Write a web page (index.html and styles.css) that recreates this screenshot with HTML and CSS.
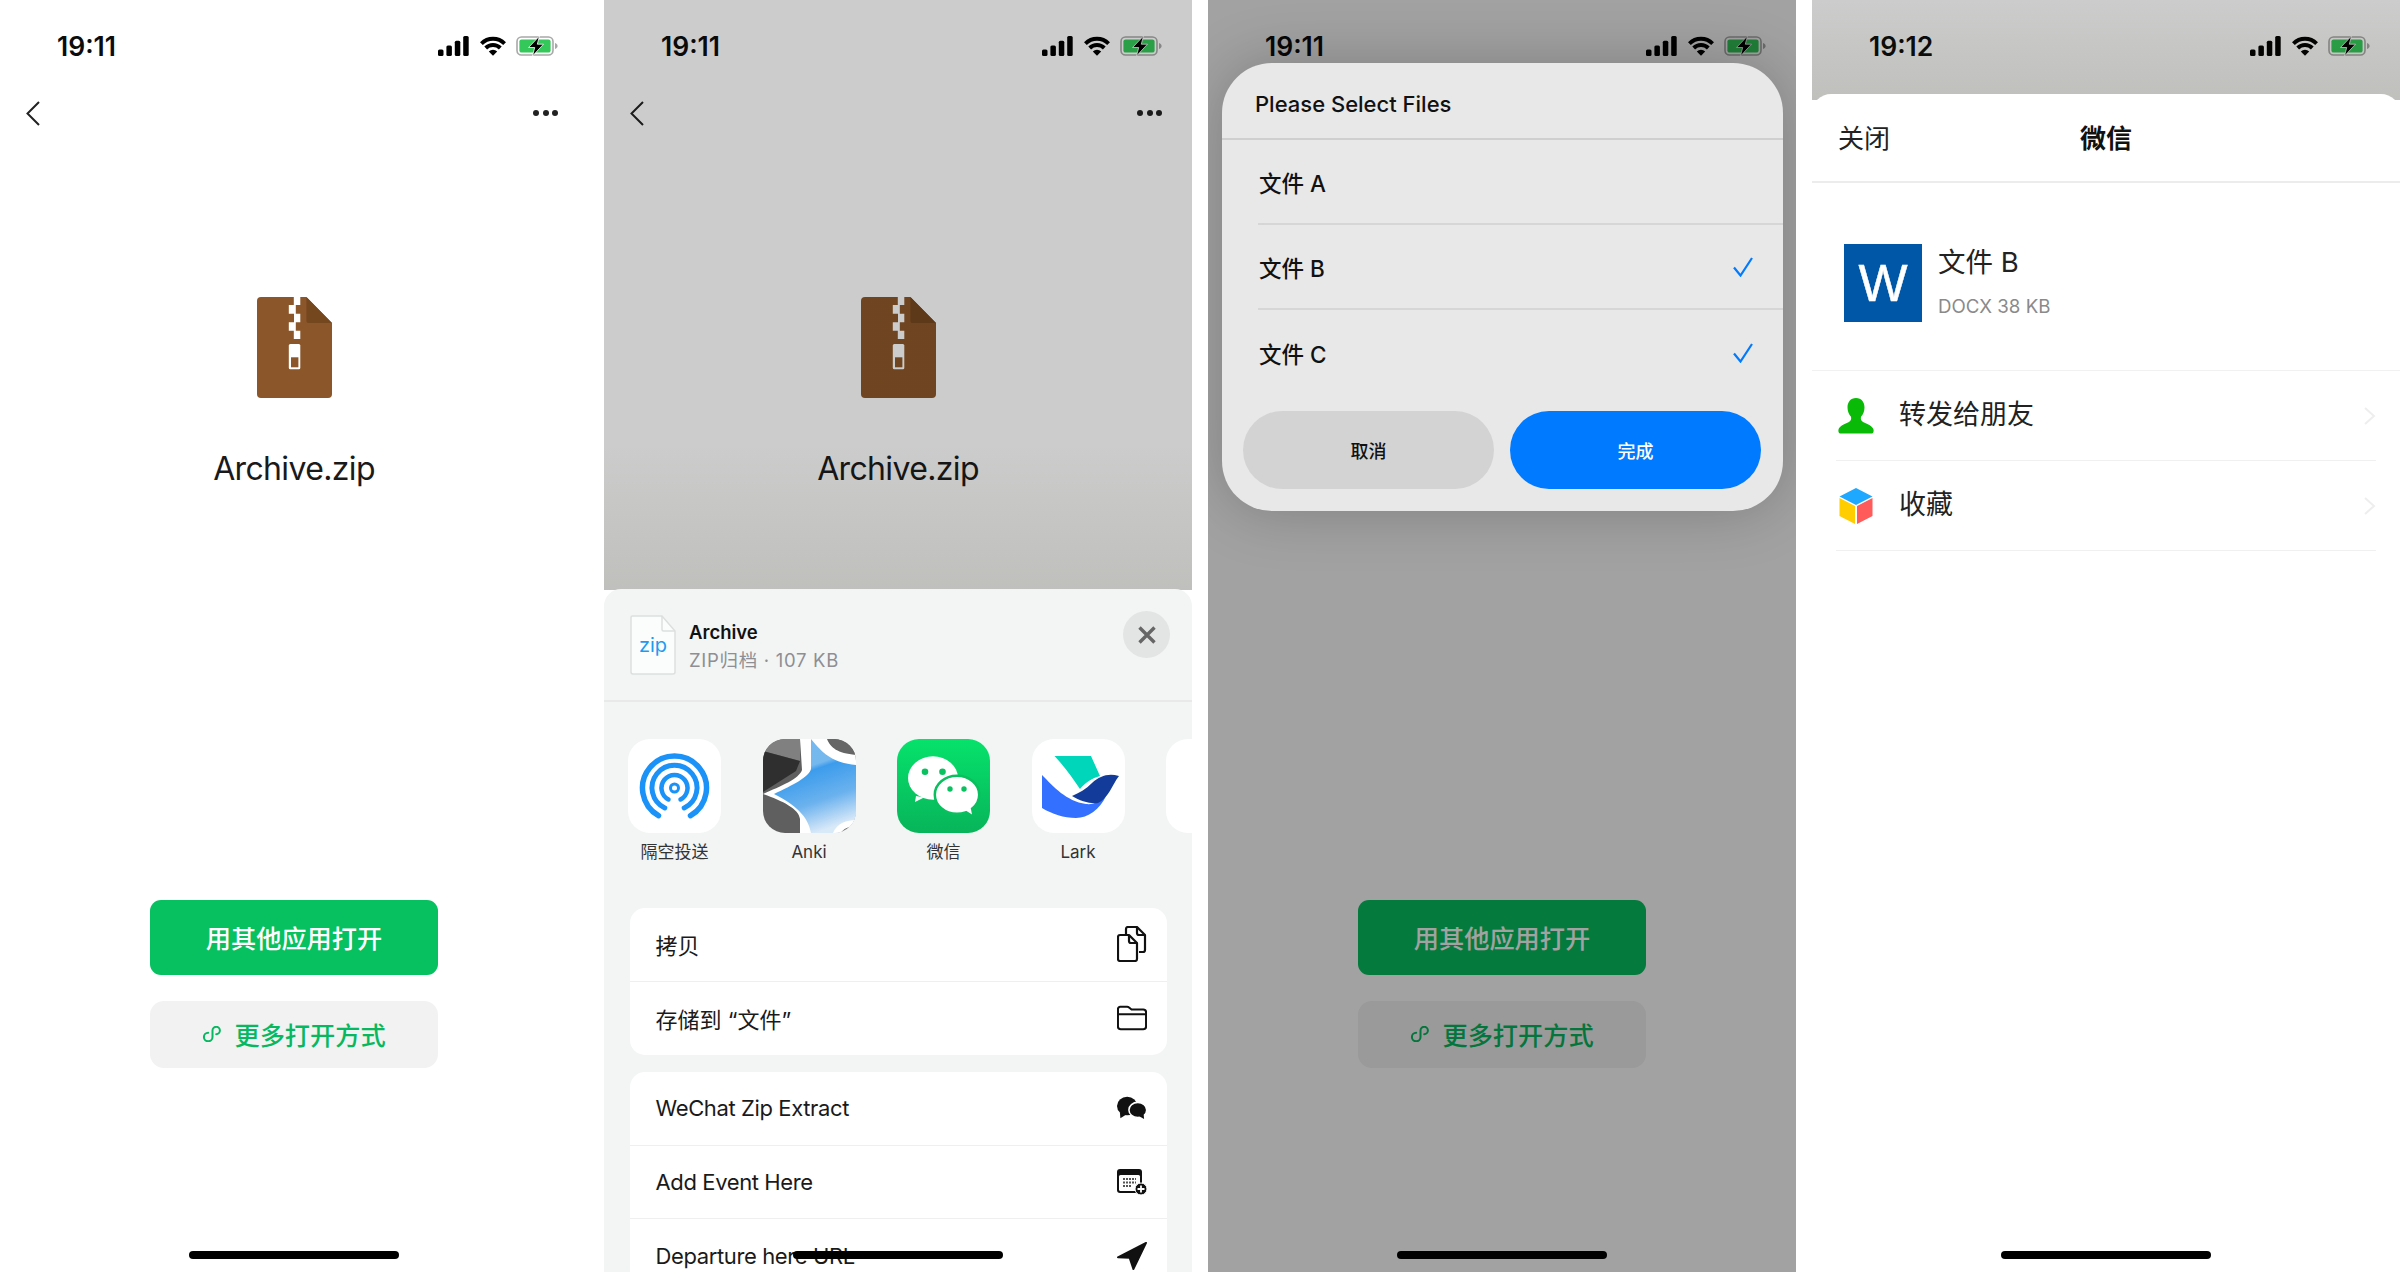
FILE: index.html
```html
<!DOCTYPE html>
<html lang="zh">
<head>
<meta charset="utf-8">
<title>Archive.zip</title>
<link rel="stylesheet" href="styles.css">
</head>
<body>
<svg class="defs" width="0" height="0" aria-hidden="true">
  <symbol id="signal" viewBox="0 0 31 20"><rect x="0" y="13.5" width="5.5" height="6.5" rx="1.5"/><rect x="8.4" y="9.5" width="5.5" height="10.5" rx="1.5"/><rect x="16.8" y="4.8" width="5.5" height="15.2" rx="1.5"/><rect x="25.2" y="0" width="5.5" height="20" rx="1.5"/></symbol>
  <symbol id="wifi" viewBox="0 0 26 20"><path d="M1.4 7.6A16.4 16.4 0 0 1 24.6 7.6M5.700 12A10.300 10.300 0 0 1 20.300 12" fill="none" stroke="#000" stroke-width="3.900"/><path d="M8.800 15.500A6 6 0 0 1 17.200 15.500L13 19.800Z"/></symbol>
  <symbol id="battery" viewBox="0 0 42 20"><rect x="1" y="1" width="36" height="18" rx="4.5" fill="none" stroke="#a8a8a8" stroke-width="1.6"/><rect x="3.4" y="3.4" width="31.2" height="13.2" rx="2.2" fill="#34c759"/><path d="M39 7v6c1.6-.5 2.6-1.6 2.6-3S40.600 7.500 39 7z" fill="#a8a8a8"/><path d="M23.500 0 12.500 11.500h6.200L16.500 20 27.500 8.200h-6.200z" stroke="#fff" stroke-width=".8"/></symbol>
  <symbol id="filezip" viewBox="0 0 75 101"><path d="M4 0H49.400L75 26V97a4 4 0 0 1-4 4H4a4 4 0 0 1-4-4V4a4 4 0 0 1 4-4z" fill="#8b5629"/><path d="M49.400 0 75 26H52a2.600 2.600 0 0 1-2.600-2.600z" fill="#74471f"/><path d="M36.800 0h6.500v8h-6.500zM31.800 8h7v8.700h-7zM37 16.700h6.300v8.600H37zM31.800 25.300h7v8.400h-7zM36.800 33.700h6.500V42h-6.500z" fill="#fff"/><rect x="31.800" y="47" width="11.500" height="25.300" rx="1.500" fill="#fff"/><rect x="34" y="60.300" width="7.400" height="10" fill="#8b5629"/></symbol>
  <symbol id="link" viewBox="0 0 20 16"><path d="M14.200 8.200A3.700 3.700 0 1 0 10.500 4.500V11A4.300 4.300 0 1 1 6.200 6.700" fill="none" stroke="#07b860" stroke-width="2" stroke-linecap="round"/></symbol>
</svg>

<main class="screens">

  <section class="phone">
    <header class="status"><span class="time">19:11</span><span class="status-icons"><svg class="ic-signal"><use href="#signal"/></svg><svg class="ic-wifi"><use href="#wifi"/></svg><svg class="ic-battery"><use href="#battery"/></svg></span></header>
    <nav class="nav"><svg class="back" viewBox="0 0 14 25"><path d="M13 1 1.500 12.500 13 24"/></svg><span class="dots"><i></i><i></i><i></i></span></nav>
    <div class="file"><svg class="file-icon"><use href="#filezip"/></svg><h1 class="file-name">Archive.zip</h1></div>
    <div class="actions"><button class="btn btn-primary">用其他应用打开</button><button class="btn btn-secondary"><svg class="ic-link"><use href="#link"/></svg>更多打开方式</button></div>
    <div class="home"></div>
  </section>

  <section class="phone">
    <header class="status"><span class="time">19:11</span><span class="status-icons"><svg class="ic-signal"><use href="#signal"/></svg><svg class="ic-wifi"><use href="#wifi"/></svg><svg class="ic-battery"><use href="#battery"/></svg></span></header>
    <nav class="nav"><svg class="back" viewBox="0 0 14 25"><path d="M13 1 1.500 12.500 13 24"/></svg><span class="dots"><i></i><i></i><i></i></span></nav>
    <div class="file"><svg class="file-icon"><use href="#filezip"/></svg><h1 class="file-name">Archive.zip</h1></div>
    <div class="scrim scrim-soft"></div>
    <div class="share">
      <div class="share-head">
        <svg class="zip-doc" viewBox="0 0 46 60"><path d="M2.500 1H32L45 16V57a2 2 0 0 1-2 2H3a2 2 0 0 1-2-2V2.500A1.500 1.500 0 0 1 2.500 1z" fill="#fbfdfd" stroke="#dcdfde" stroke-width="1.500"/><path d="M32 1V14.500a1.500 1.500 0 0 0 1.500 1.500H45" fill="none" stroke="#dcdfde" stroke-width="1.500"/><text x="23" y="37" class="zip-text">zip</text></svg>
        <div class="share-info"><div class="share-title">Archive</div><div class="share-sub">ZIP归档 · 107 KB</div></div>
        <span class="close"><svg viewBox="0 0 18 18"><path d="M1.500 1.500 16.500 16.500M16.500 1.500 1.500 16.500"/></svg></span>
      </div>
      <div class="apps">
        <div class="app">
          <svg class="app-icon" viewBox="0 0 93 94"><g fill="none" stroke="#1a92f7" stroke-linecap="round"><path stroke-width="5.500" d="M30.500 76.700A32 32 0 1 1 62.500 76.700"/><path stroke-width="5" d="M36.800 69A22.500 22.500 0 1 1 56.200 69"/><path stroke-width="4.500" d="M40.500 60.500A13 13 0 1 1 52.500 60.500"/><circle cx="46.500" cy="49" r="4" stroke-width="3"/></g></svg>
          <span class="app-label">隔空投送</span>
        </div>
        <div class="app">
          <svg class="app-icon" viewBox="0 0 93 94">
            <defs><linearGradient id="ankiBlue" x1="0.200" y1="0" x2="0.500" y2="1"><stop offset="0" stop-color="#74b9f0"/><stop offset=".33" stop-color="#75b8ee"/><stop offset=".38" stop-color="#3c9cec"/><stop offset=".7" stop-color="#6bb2ee"/><stop offset="1" stop-color="#d8e9f8"/></linearGradient></defs>
            <rect width="93" height="94" fill="#5f5f5f"/><path d="M0 0H37V22L0 12z" fill="#808080"/><path d="M0 12 37 22 33 32 0 53z" fill="#2f2f2f"/><path d="M64 0H93V16L75 14z" fill="#666"/>
            <path d="M37 0H64C68 9 74 14 93 16V94H37V80C36 70 20 62 0 55 18 47 36 40 39 31z" fill="#fff"/>
            <path d="M48 0C58 12 68 24 93 26V94H48C46 82 38 68 11 55 30 46 46 38 48 30z" fill="url(#ankiBlue)"/>
            <path d="M93 81C84 81 74 84 70 94H93z" fill="#fff"/><path d="M93 87C86 87 80 90 78 94H93z" fill="#666"/>
          </svg>
          <span class="app-label">Anki</span>
        </div>
        <div class="app">
          <svg class="app-icon" viewBox="0 0 93 94">
            <defs><linearGradient id="wxGreen" x1="0" y1="0" x2="0" y2="1"><stop offset="0" stop-color="#06e26b"/><stop offset="1" stop-color="#08b45a"/></linearGradient></defs>
            <rect width="93" height="94" fill="url(#wxGreen)"/>
            <path d="M19 57 18 63 27 58.500Z" fill="#fff"/><ellipse cx="36" cy="39" rx="25" ry="21.700" fill="#fff"/>
            <circle cx="28" cy="32.700" r="3.300" fill="#09c25f"/><circle cx="45.500" cy="32.700" r="3.300" fill="#09c25f"/>
            <ellipse cx="60" cy="55.700" rx="22.200" ry="19" fill="#fff" stroke="#0abf5e" stroke-width="2.500"/>
            <path d="M68 71 75 75.500 73.500 68Z" fill="#fff"/>
            <circle cx="53" cy="50" r="2.700" fill="#09c25f"/><circle cx="67" cy="50" r="2.700" fill="#09c25f"/>
          </svg>
          <span class="app-label">微信</span>
        </div>
        <div class="app">
          <svg class="app-icon" viewBox="0 0 93 94">
            <path d="M22.500 17H59L68 37C60 39 53 44 48 50 40 38 32 27 22.500 17z" fill="#00d6b9"/>
            <path d="M10 36C22 48 34 62 54 65 62 66 68 62 74 57 68 70 56 79 44 79 32 79 20 75 10 69z" fill="#3370ff"/>
            <path d="M87 37C76 34 68 37 60 44 54 50 47 54 40 57 48 62 58 65 66 64 76 60 80 46 87 37z" fill="#133c9a"/>
          </svg>
          <span class="app-label">Lark</span>
        </div>
        <div class="app"><span class="app-icon app-blank"></span></div>
      </div>
      <ul class="group">
        <li class="row"><span>拷贝</span><svg class="row-ic" viewBox="0 0 30 36" fill="none" stroke="#111" stroke-width="2.200" stroke-linejoin="round"><path d="M9 8V3a2 2 0 0 1 2-2h9l8 8v15a2 2 0 0 1-2 2h-4"/><path d="M20 1V7a2 2 0 0 0 2 2h6"/><path d="M3 9h9l8 8v16a2 2 0 0 1-2 2H3a2 2 0 0 1-2-2V11a2 2 0 0 1 2-2z" fill="#fff"/><path d="M12 9v6a2 2 0 0 0 2 2h6"/></svg></li>
        <li class="row"><span>存储到 “文件”</span><svg class="row-ic" viewBox="0 0 32 26" fill="none" stroke="#111" stroke-width="2.200" stroke-linejoin="round"><path d="M1 9V3.500A2.500 2.500 0 0 1 3.500 1h7.300c1 0 1.700.4 2.400 1l2.300 2H28a3 3 0 0 1 3 3v15a3 3 0 0 1-3 3H4a3 3 0 0 1-3-3z"/><path d="M1 9H31"/></svg></li>
      </ul>
      <ul class="group">
        <li class="row row-en"><span>WeChat Zip Extract</span><svg class="row-ic" viewBox="0 0 31 23" fill="#111"><ellipse cx="10.500" cy="9.500" rx="10.500" ry="9.500"/><path d="M3 16 3.500 22 10 18z"/><ellipse cx="21.500" cy="13.500" rx="9.200" ry="7.800" stroke="#fff" stroke-width="1.600"/><path d="M23 20 28 22.800 27.500 18z"/></svg></li>
        <li class="row row-en"><span>Add Event Here</span><svg class="row-ic" viewBox="0 0 30 26"><path d="M3 0H22a3 3 0 0 1 3 3V21a3 3 0 0 1-3 3H3a3 3 0 0 1-3-3V3a3 3 0 0 1 3-3z" fill="#111"/><rect x="2" y="6" width="21" height="16" rx="1.500" fill="#fff"/><path d="M6 10h13M6 13.500h13M6 17h8" stroke="#555" stroke-width="2" stroke-dasharray="2 1"/><circle cx="24" cy="20" r="6" fill="#111" stroke="#fff" stroke-width="1"/><path d="M24 16.500v7M20.500 20h7" stroke="#fff" stroke-width="1.800"/></svg></li>
        <li class="row row-en"><span>Departure here URL</span><svg class="row-ic" viewBox="-1 -1 32 30"><path d="M30 0 0 15.500 12.500 16 16.500 28z" fill="#111" stroke="#111" stroke-width="2" stroke-linejoin="round"/></svg></li>
      </ul>
    </div>
    <div class="home"></div>
  </section>

  <section class="phone">
    <header class="status"><span class="time">19:11</span><span class="status-icons"><svg class="ic-signal"><use href="#signal"/></svg><svg class="ic-wifi"><use href="#wifi"/></svg><svg class="ic-battery"><use href="#battery"/></svg></span></header>
    <nav class="nav"><svg class="back" viewBox="0 0 14 25"><path d="M13 1 1.500 12.500 13 24"/></svg><span class="dots"><i></i><i></i><i></i></span></nav>
    <div class="file"><svg class="file-icon"><use href="#filezip"/></svg><h1 class="file-name">Archive.zip</h1></div>
    <div class="actions"><button class="btn btn-primary">用其他应用打开</button><button class="btn btn-secondary"><svg class="ic-link"><use href="#link"/></svg>更多打开方式</button></div>
    <div class="scrim scrim-dark"></div>
    <div class="select-card">
      <div class="select-title">Please Select Files</div>
      <ul class="select-list">
        <li class="select-row"><span>文件 A</span></li>
        <li class="select-row"><span>文件 B</span><svg class="check" viewBox="0 0 20 20"><path d="M1 10.500 7.500 18.500 19 1"/></svg></li>
        <li class="select-row"><span>文件 C</span><svg class="check" viewBox="0 0 20 20"><path d="M1 10.500 7.500 18.500 19 1"/></svg></li>
      </ul>
      <div class="select-actions"><button class="pill pill-cancel">取消</button><button class="pill pill-done">完成</button></div>
    </div>
    <div class="home"></div>
  </section>

  <section class="phone">
    <header class="status"><span class="time">19:12</span><span class="status-icons"><svg class="ic-signal"><use href="#signal"/></svg><svg class="ic-wifi"><use href="#wifi"/></svg><svg class="ic-battery"><use href="#battery"/></svg></span></header>
    <div class="scrim scrim-top"></div>
    <div class="wx-sheet">
      <div class="wx-head"><span class="wx-close">关闭</span><span class="wx-title">微信</span></div>
      <div class="wx-file">
        <div class="word-icon">W</div>
        <div class="wx-meta"><div class="wx-name">文件 B</div><div class="wx-size">DOCX 38 KB</div></div>
      </div>
      <ul class="wx-list">
        <li class="wx-row"><svg class="wx-ic" viewBox="0 0 36 36"><path d="M18 0c-5.500 0-8.500 4.200-8.500 9.500 0 3.800 1.500 7.200 3.500 9.300.6 2.500-.2 4.300-2.500 5.500C6 26.500 1.500 28 .5 31.500.2 33 .5 35.500 2.500 35.500h31c2 0 2.400-2.500 2-4-1-3.500-5.500-5-10-7.200-2.300-1.200-3.100-3-2.500-5.500 2-2.100 3.500-5.500 3.500-9.300C26.500 4.200 23.500 0 18 0z" fill="#09bb07"/></svg><span>转发给朋友</span><svg class="chev" viewBox="0 0 12 18"><path d="M1.500 1 10.500 9 1.500 17"/></svg></li>
        <li class="wx-row"><svg class="wx-ic" viewBox="0 0 34 36"><path d="M17 0 33.500 8.500 17 17 .5 8.500z" fill="#1fa8ff"/><path d="M.5 10 16 18V36L.500 28z" fill="#ffcd00"/><path d="M33.500 10 18 18V36L33.500 28z" fill="#ff5b5b"/></svg><span>收藏</span><svg class="chev" viewBox="0 0 12 18"><path d="M1.500 1 10.500 9 1.500 17"/></svg></li>
      </ul>
    </div>
    <div class="home"></div>
  </section>

</main>
</body>
</html>
```

FILE: styles.css
```css
* { box-sizing: border-box; }
html, body { margin: 0; padding: 0; background: #fff; }
body { width: 2400px; height: 1272px; overflow: hidden; font-family: Inter, "Noto Sans CJK SC", sans-serif; color: #111; }
ul { list-style: none; margin: 0; padding: 0; }
button { font: inherit; border: 0; padding: 0; }
.defs { position: absolute; }

.screens { display: grid; grid-template-columns: repeat(4, 588px); column-gap: 16px; height: 1272px; }
.phone { position: relative; display: flex; flex-direction: column; height: 1272px; overflow: hidden; background: #fff; }

.status { display: flex; justify-content: space-between; align-items: center; height: 92px; padding: 0 30px 0 57px; flex: none; }
.time { font-size: 26.500px; font-weight: 600; color: #0c0c0c; }
.status-icons { display: flex; align-items: center; gap: 10.500px; }
.status-icons svg { display: block; height: 20px; }
.ic-signal { width: 31px; }
.ic-wifi { width: 26px; }
.ic-battery { width: 42px; }

.nav { display: flex; justify-content: space-between; align-items: center; height: 42px; padding: 0 30px 0 26px; flex: none; }
.back { width: 14px; height: 25px; fill: none; stroke: #222; stroke-width: 2; }
.dots { display: flex; gap: 3.500px; }
.dots i { width: 6px; height: 6px; border-radius: 50%; background: #222; display: block; }

.file { display: flex; flex-direction: column; align-items: center; padding-top: 163px; flex: none; }
.file-icon { width: 75px; height: 101px; display: block; }
.file-name { margin: 49px 0 0; font-size: 32px; line-height: 44px; font-weight: 400; color: #1a1a1a; letter-spacing: -.65px; }

.actions { display: flex; flex-direction: column; align-items: center; gap: 26px; margin-top: auto; padding-bottom: 204px; }
.btn { width: 288px; display: flex; align-items: center; justify-content: center; font-size: 25.200px; font-weight: 500; border-radius: 11px; padding-bottom: 2px; }
.btn-primary { height: 75px; background: #07c160; color: #fff; }
.btn-secondary { height: 67px; background: #f2f2f2; color: #07b860; gap: 12px; border-radius: 14px; }
.ic-link { width: 20px; height: 16px; }

.home { position: absolute; left: 189px; bottom: 13px; width: 210px; height: 8px; border-radius: 4px; background: #000; z-index: 5; }

.scrim { position: absolute; inset: 0; }
.scrim-soft { background: linear-gradient(180deg, rgba(0,0,0,.2) 0, rgba(0,0,0,.2) 75%, rgba(20,24,10,.27) 100%); height: 590px; bottom: auto; }
.scrim-dark { background: rgba(0,0,0,.365); }
.scrim-top { background: linear-gradient(180deg, rgba(0,0,0,.2) 0, rgba(20,24,10,.27) 100%); height: 100px; bottom: auto; }

.share { position: absolute; left: 0; right: 0; top: 589px; bottom: 0; background: #f3f5f4; border-radius: 17px 17px 0 0; overflow: hidden; }
.share-head { position: relative; display: flex; align-items: center; height: 113px; padding: 0 26px; border-bottom: 2px solid #e8e9e8; }
.zip-doc { width: 46px; height: 60px; flex: none; }
.zip-text { font-size: 20px; fill: #1e9bf0; text-anchor: middle; font-family: Inter, sans-serif; }
.share-info { margin-left: 13px; flex: 1; display: flex; flex-direction: column; gap: 6px; padding-top: 2px; }
.share-title { font-size: 18.500px; line-height: 22px; font-weight: 600; color: #111; }
.share-sub { font-size: 18.500px; line-height: 22px; color: #8e8e93; letter-spacing: .7px; }
.close { width: 47px; height: 47px; border-radius: 50%; background: #e3e5e4; display: flex; align-items: center; justify-content: center; margin-bottom: 20px; margin-right: -4px; }
.close svg { width: 18px; height: 18px; fill: none; stroke: #666; stroke-width: 3.400; }

.apps { display: flex; gap: 41.500px; padding: 37px 0 0 24px; height: 206px; overflow: hidden; }
.app { flex: none; width: 93px; display: flex; flex-direction: column; align-items: center; }
.app-icon { display: block; width: 93px; height: 94px; border-radius: 22px; background: #fff; flex: none; }
.app-label { margin-top: 7px; font-size: 17px; line-height: 24px; color: #333; white-space: nowrap; }

.group { margin: 0 25.500px 17px; background: #fff; border-radius: 15px; overflow: hidden; }
.row { display: flex; justify-content: space-between; align-items: center; height: 73.500px; padding: 0 20px 0 26px; font-size: 22px; color: #1a1a1a; border-bottom: 1px solid #efefef; }
.row:last-child { border-bottom: 0; }
.row-en { letter-spacing: -.38px; }
.row-ic { width: 30px; height: 36px; display: block; }

.select-card { position: absolute; left: 14px; right: 13px; top: 62.500px; height: 448.500px; background: #e8e8e8; border-radius: 50px; box-shadow: 0 0 60px rgba(0,0,0,.22); display: flex; flex-direction: column; }
.select-title { height: 77.500px; display: flex; align-items: center; padding: 7px 0 0 33px; font-size: 22px; font-weight: 500; color: #111; border-bottom: 2px solid #cfcfcf; flex: none; }
.select-list { flex: none; }
.select-row { display: flex; justify-content: space-between; align-items: center; height: 85px; margin-left: 36px; padding: 0 30px 0 1px; font-size: 22.500px; font-weight: 500; border-bottom: 2px solid #d6d6d6; }
.select-row:last-child { border-bottom: 0; }
.check { width: 20px; height: 20px; fill: none; stroke: #007aff; stroke-width: 2.200; }
.select-actions { display: flex; gap: 16px; padding: 16px 22px 0 21px; }
.pill { flex: 1; height: 78px; border-radius: 39px; font-size: 18px; font-weight: 500; }
.pill-cancel { background: #d3d3d3; color: #111; }
.pill-done { background: #007aff; color: #fff; }

.wx-sheet { position: absolute; left: 0; right: 0; top: 94px; bottom: 0; background: #fff; border-radius: 19px 19px 0 0; overflow: hidden; }
.wx-head { position: relative; display: flex; justify-content: center; align-items: center; height: 89px; border-bottom: 2px solid #ececec; font-size: 26px; padding-bottom: 3px; }
.wx-close { position: absolute; left: 26px; color: #222; }
.wx-title { font-weight: 700; color: #111; }
.wx-file { display: flex; align-items: center; gap: 16px; height: 188px; padding: 12px 0 0 32px; border-bottom: 1px solid #f1f1f1; }
.word-icon { width: 78px; height: 78px; background: #0057a8; color: #fff; font-family: "Liberation Sans", Arial, sans-serif; font-size: 52px; display: flex; align-items: center; justify-content: center; flex: none; -webkit-text-stroke: .5px #fff; }
.wx-meta { display: flex; flex-direction: column; gap: 15px; margin-top: -2px; }
.wx-name { font-size: 27.500px; line-height: 36px; color: #222; }
.wx-size { font-size: 18.700px; line-height: 24px; color: #8a8a8a; }
.wx-list { margin: 0 24px; }
.wx-row { display: flex; align-items: center; height: 90px; font-size: 27px; color: #222; border-bottom: 1px solid #f0f0f0; }
.wx-row span { flex: 1; margin-left: 25px; padding-bottom: 6px; }
.wx-ic { width: 36px; height: 36px; flex: none; margin-left: 2px; }
.chev { width: 13px; height: 18px; fill: none; stroke: #eee; stroke-width: 2; }
```
